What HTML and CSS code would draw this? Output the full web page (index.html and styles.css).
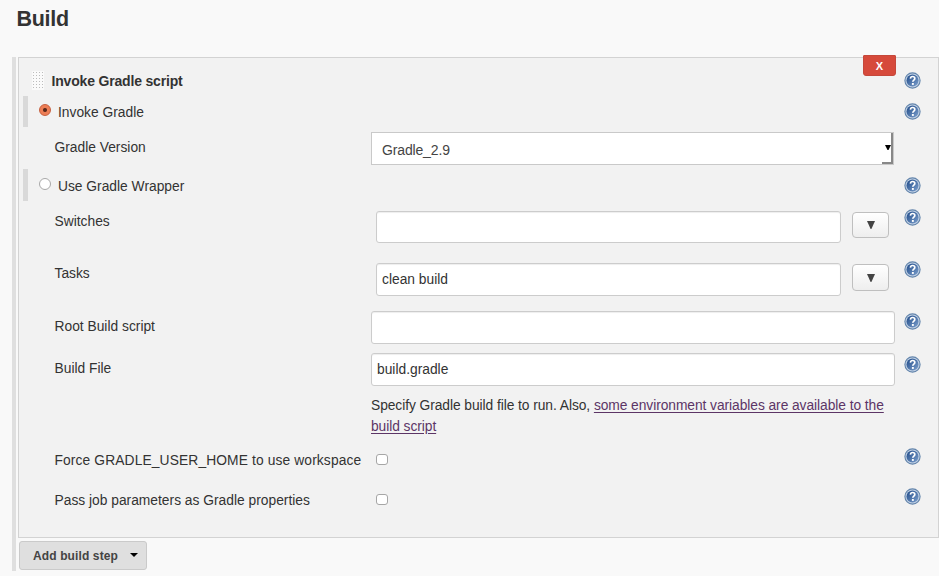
FILE: index.html
```html
<!DOCTYPE html>
<html lang="en">
<head>
<meta charset="utf-8">
<title>Build</title>
<link rel="stylesheet" href="styles.css">
</head>
<body>
<svg class="defs" width="0" height="0" aria-hidden="true">
  <defs>
    <linearGradient id="disc" x1="0" y1="0" x2="1" y2="1">
      <stop offset="0" stop-color="#1f4a88"/>
      <stop offset="1" stop-color="#7c9fcc"/>
    </linearGradient>
    <symbol id="help" viewBox="0 0 17 17">
      <circle cx="8.5" cy="8.5" r="7.6" fill="#c3d2e5" stroke="#6284ab" stroke-width="1.1"/>
      <circle cx="8.5" cy="8.5" r="6" fill="url(#disc)"/>
      <path d="M6.400 6.600C6.500 5 7.300 4.500 8.600 4.500c1.400 0 2.200.7 2.200 1.900 0 1.700-2 1.700-2 3.400" fill="none" stroke="#fff" stroke-width="1.700"/>
      <rect x="7.9" y="11" width="1.900" height="1.900" fill="#fff"/>
    </symbol>
  </defs>
</svg>
<h1>Build</h1>
<div class="steps">
  <section class="step">
    <div class="row header">
      <div class="label"><svg class="grip" width="12" height="19"><defs><pattern id="dots" width="3" height="3" patternUnits="userSpaceOnUse"><rect width="3" height="3" fill="#fafafa"/><rect x="1" y="1" width="1" height="1" fill="#bcbcbc"/></pattern></defs><rect width="12" height="19" fill="url(#dots)"/></svg><b>Invoke Gradle script</b></div>
      <div class="control"><button class="delete">X</button></div>
      <svg class="help"><use href="#help"/></svg>
    </div>
    <div class="row choice first">
      <div class="label"><i class="radio on"></i><span>Invoke Gradle</span></div>
      <div class="control"></div>
      <svg class="help"><use href="#help"/></svg>
    </div>
    <div class="row version">
      <div class="label">Gradle Version</div>
      <div class="control"><div class="select"><span>Gradle_2.9</span><i class="drop"><svg width="6" height="5"><path d="M0 0h6L3.500 5h-1z"/></svg></i></div></div>
    </div>
    <div class="row choice second">
      <div class="label"><i class="radio"></i><span>Use Gradle Wrapper</span></div>
      <div class="control"></div>
      <svg class="help"><use href="#help"/></svg>
    </div>
    <div class="row switches">
      <div class="label">Switches</div>
      <div class="control expandable"><div class="input"></div><button class="expand"><svg width="8" height="8"><path d="M0 0h8L4.400 8h-.8z"/></svg></button></div>
      <svg class="help"><use href="#help"/></svg>
    </div>
    <div class="row tasks">
      <div class="label">Tasks</div>
      <div class="control expandable"><div class="input">clean build</div><button class="expand"><svg width="8" height="8"><path d="M0 0h8L4.400 8h-.8z"/></svg></button></div>
      <svg class="help"><use href="#help"/></svg>
    </div>
    <div class="row root">
      <div class="label">Root Build script</div>
      <div class="control"><div class="input"></div></div>
      <svg class="help"><use href="#help"/></svg>
    </div>
    <div class="row file">
      <div class="label">Build File</div>
      <div class="control"><div class="input">build.gradle</div>
        <p>Specify Gradle build file to run. Also, <a>some environment variables are available to the<br>build script</a></p></div>
      <svg class="help"><use href="#help"/></svg>
    </div>
    <div class="row check">
      <div class="label wide">Force GRADLE_USER_HOME to use workspace</div>
      <div class="control"><i class="checkbox"></i></div>
      <svg class="help"><use href="#help"/></svg>
    </div>
    <div class="row check">
      <div class="label">Pass job parameters as Gradle properties</div>
      <div class="control"><i class="checkbox"></i></div>
      <svg class="help"><use href="#help"/></svg>
    </div>
  </section>
  <button class="add">Add build step<svg width="8" height="4"><path d="M0 0h8L4 4z"/></svg></button>
</div>
</body>
</html>
```
FILE: styles.css
```css
* { box-sizing: border-box; }
body {
  margin: 0;
  height: 576px;
  overflow: hidden;
  background: #f9f9f9;
  color: #333;
  font: 13.8px/20px "Liberation Sans", Arial, sans-serif;
}
.defs { display: block; }
h1 { margin: 0; padding: 7px 0 0 16.500px; height: 57px; font-size: 21.500px; line-height: 24px; letter-spacing: -.3px; }
button { font-family: inherit; padding: 0; }
.steps { margin-left: 12px; height: 514px; border-left: 4px solid #dfdfdf; padding-left: 2px; }
.step { height: 481px; background: #f2f2f2; border: 1px solid #d3d3d3; }
.row { display: grid; grid-template-columns: 352px 524px 1fr; align-items: start; }
.label { padding-left: 35.500px; white-space: nowrap; }
.help { width: 17px; height: 17px; margin-left: 9px; }

.header { height: 38px; }
.header .label { display: flex; padding: 12px 0 0 13px; }
.header b { margin: 1px 0 0 7.500px; font-size: 14px; letter-spacing: -.18px; }
.header .help { margin-top: 14px; }
.grip { margin-top: 1px; }
.delete {
  display: block;
  width: 33px;
  height: 21px;
  margin: -3px 0 0 492px;
  border: 1px solid #c5483b;
  border-radius: 1px 1px 3px 3px;
  background: #d64a3b;
  color: #fff;
  font-size: 11px;
  font-weight: bold;
}

.choice .label { display: flex; height: 32px; margin-left: 4px; padding: 0 0 0 11px; border-left: 5px solid #d9d9d9; }
.choice span { margin-top: 7px; }
.choice .help { margin-top: 7px; }
.first { height: 31px; }
.first .label { height: 31px; }
.second { height: 32px; }
.second .help { margin-top: 8px; }
.second span { margin-top: 8px; }
.radio { width: 12px; height: 12px; margin: 8px 7px 0 0; border: 1px solid #a8a8a8; border-radius: 50%; background: #fff; }
.second .radio { margin-top: 9px; }
.radio.on { border-color: #c65e3d; background: radial-gradient(circle, #59291b 0 1.5px, #ed7e56 2.5px); }

.version { height: 42px; }
.version .label { padding-top: 11px; }
.select { display: flex; justify-content: space-between; width: 523px; height: 33px; margin-top: 5px; border: 1px solid #c9c9c9; background: #fff; }
.select span { padding: 7px 0 0 10px; font-size: 14px; letter-spacing: -.15px; color: #444; }
.drop { display: flex; align-items: center; justify-content: flex-end; width: 11px; height: 31px; border-right: 2px solid #888; border-bottom: 2px solid #888; }

.input { height: 33px; padding: 6px 5px; width: 524px; border: 1px solid #ccc; border-radius: 3px; background: #fff; box-shadow: inset 0 1px 1px #eee; }
.expandable { display: flex; padding-left: 5px; gap: 11px; }
.expandable .input { width: 465px; }
.expand { display: flex; align-items: center; justify-content: center; width: 37px; height: 26px; margin-top: 1px; border: 1px solid #bfbfbf; border-radius: 4px; background: linear-gradient(#fff, #eee); }
.expand svg { fill: #444; }
.switches { height: 52px; padding-top: 10px; }
.switches .label { padding-top: 1px; }
.switches .input { height: 32px; }
.switches .help { margin-top: -2px; }
.tasks { height: 53px; padding-top: 10px; }
.tasks .label { padding-top: 1px; }
.tasks .expand { height: 27px; }
.tasks .help { margin-top: -2px; }
.root { height: 42px; padding-top: 5px; }
.root .help { margin-top: 2px; }
.root .label, .file .label { padding-top: 6px; }
.file { height: 92px; padding-top: 5px; }
.file .help { margin-top: 3px; }
.file p { margin: 9px 0 0; line-height: 21px; white-space: nowrap; letter-spacing: -.065px; }
a { color: #5c3566; text-decoration: underline; text-underline-offset: 2px; }
.check { height: 40px; padding-top: 8px; }
.check .label { padding-top: 3px; }
.wide { letter-spacing: .12px; }
.checkbox { display: block; width: 12px; height: 11px; margin: 6px 0 0 5px; border: 1px solid #a6a6a6; border-radius: 3px; background: #fff; }

.add { display: flex; align-items: center; gap: 12px; width: 128px; height: 29px; margin: 3px 0 0 1px; padding-left: 13px; border: 1px solid #cacaca; border-radius: 3px; background: #dfdfdf; color: #444; font-size: 12px; font-weight: bold; letter-spacing: .12px; }
.add svg { margin-bottom: 2px; }
```
